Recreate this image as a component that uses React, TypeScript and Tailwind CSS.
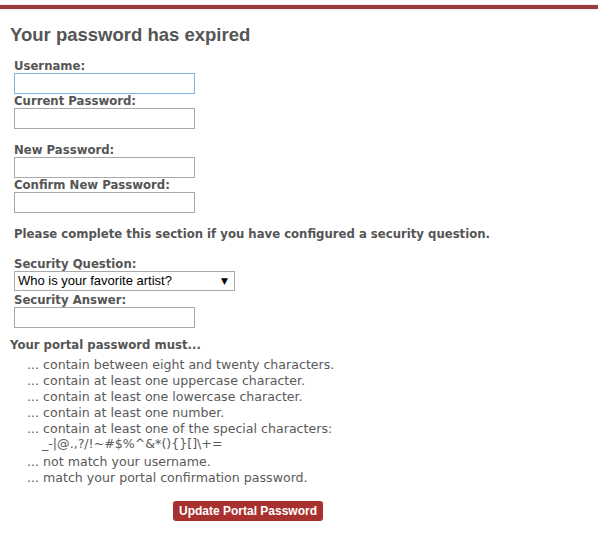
const labelCls =
  "block h-[14px] text-[11.7px] font-bold leading-[14px] text-[#555555]";
const inputCls =
  "block h-[21px] w-[181px] border border-[#a9a9a9] bg-white px-[2px] text-[13px] outline-none";

const rules = [
  "contain between eight and twenty characters.",
  "contain at least one uppercase character.",
  "contain at least one lowercase character.",
  "contain at least one number.",
];

function Field({ label, focused }: { label: string; focused?: boolean }) {
  return (
    <div>
      <label className={labelCls}>{label}</label>
      <input
        type={label.includes("Password") ? "password" : "text"}
        autoFocus={focused}
        className={
          focused
            ? "block h-[21px] w-[181px] border border-[#7eb4ea] bg-white px-[2px] text-[13px] outline-none"
            : inputCls
        }
      />
    </div>
  );
}

export default function App() {
  return (
    <div
      className="min-h-[544px] bg-white pt-[5px] text-[#555555]"
      style={{ fontFamily: '"DejaVu Sans", Verdana, sans-serif' }}
    >
      <div className="h-[4px] w-full bg-[#973b3d] shadow-[0_0_2px_#f0b8bb]" />
      <div className="pl-[10px]">
        <h1
          className="mt-[15px] text-[18.5px] font-bold leading-[22px] text-[#555555]"
          style={{ fontFamily: '"Liberation Sans", Arial, sans-serif' }}
        >
          Your password has expired
        </h1>

        <form className="ml-[4px] mt-[13px]">
          <Field label="Username:" focused />
          <Field label="Current Password:" />

          <div className="mt-[14px]">
            <Field label="New Password:" />
            <Field label="Confirm New Password:" />
          </div>

          <p className="mt-[14px] h-[14px] text-[11.7px] font-bold leading-[14px]">
            Please complete this section if you have configured a security
            question.
          </p>

          <div className="mt-[16px]">
            <label className={labelCls}>Security Question:</label>
            <div className="relative mb-[2px] flex h-[20px] w-[221px] items-center border border-[#a9a9a9] bg-white">
              <select
                className="h-[18px] w-full appearance-none bg-transparent py-0 pl-[3px] text-[13px] leading-[18px] text-black outline-none"
                style={{ fontFamily: '"Liberation Sans", Arial, sans-serif' }}
                defaultValue="artist"
              >
                <option value="artist">Who is your favorite artist?</option>
              </select>
              <span className="pointer-events-none absolute right-[6px] top-[3px] text-[9px] leading-[12px] text-black">
                ▼
              </span>
            </div>
            <Field label="Security Answer:" />
          </div>
        </form>

        <div className="mt-[10px]">
          <p className="h-[14px] text-[11.7px] font-bold leading-[14px]">
            Your portal password must...
          </p>
          <ul className="ml-[17px] mt-[5px] text-[12.6px] leading-[16px] text-[#5a5a5a]">
            {rules.map((r) => (
              <li key={r}>... {r}</li>
            ))}
            <li className="mb-[3px]">
              ... contain at least one of the special characters:
              <div className="pl-[15px] leading-[14px]">
                _-|@.,?/!~#$%^&amp;*(){"{}"}[]\+=
              </div>
            </li>
            <li>... not match your username.</li>
            <li>... match your portal confirmation password.</li>
          </ul>
        </div>

        <button
          type="button"
          className="ml-[163px] mt-[15px] h-[20px] w-[150px] rounded-[3px] bg-[#a8302f] text-[12px] font-bold leading-[20px] text-white"
          style={{ fontFamily: '"Liberation Sans", Arial, sans-serif' }}
        >
          Update Portal Password
        </button>
      </div>
    </div>
  );
}
